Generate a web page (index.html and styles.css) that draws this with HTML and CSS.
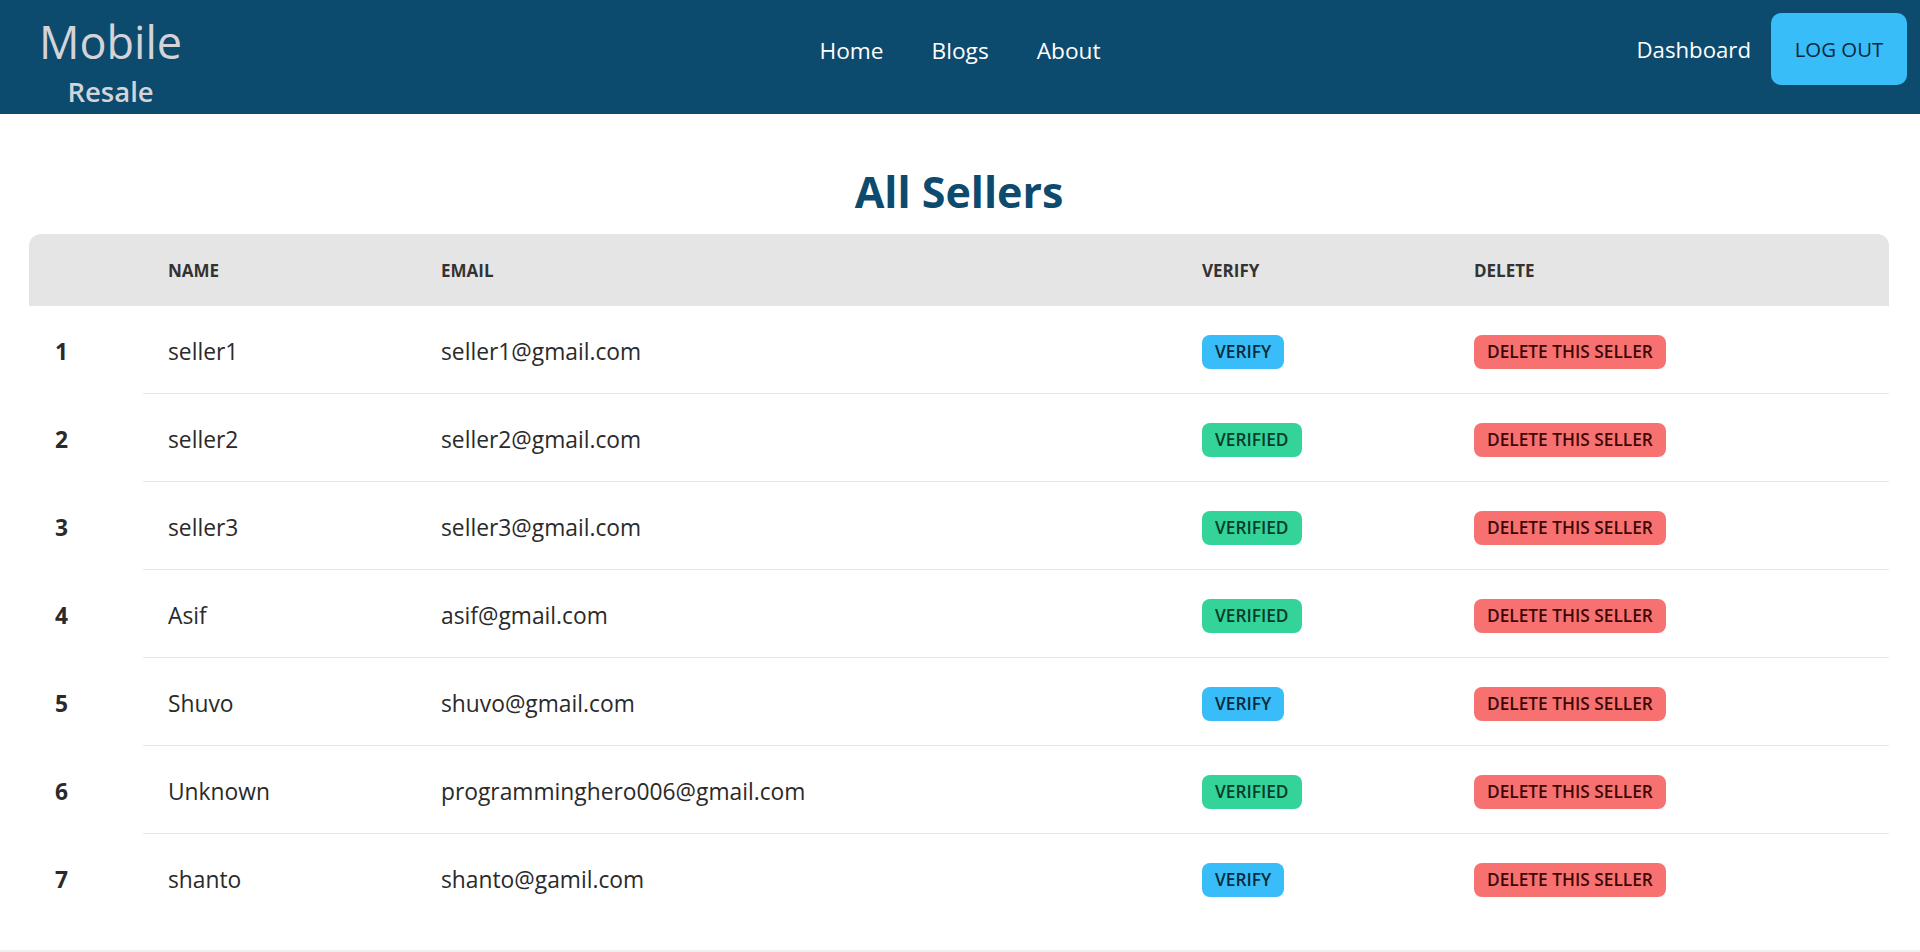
FILE: index.html
```html
<!DOCTYPE html>
<html lang="en">
<head>
<meta charset="utf-8">
<title>All Sellers - Mobile Resale</title>
<link rel="stylesheet" href="styles.css">
</head>
<body>
<header class="navbar">
  <div class="nav-left">
    <a class="logo" href="#">
      <span class="logo-main">Mobile</span>
      <span class="logo-sub">Resale</span>
    </a>
  </div>
  <nav class="nav-center">
    <a href="#">Home</a>
    <a href="#">Blogs</a>
    <a href="#">About</a>
  </nav>
  <div class="nav-right">
    <a class="nav-link" href="#">Dashboard</a>
    <button class="logout">LOG OUT</button>
  </div>
</header>
<main class="content">
  <h1 class="title">All Sellers</h1>
  <table class="sellers">
    <colgroup>
      <col class="c-idx"><col class="c-name"><col class="c-email"><col class="c-verify"><col class="c-delete">
    </colgroup>
    <thead>
      <tr><th></th><th>Name</th><th>Email</th><th>Verify</th><th>Delete</th></tr>
    </thead>
    <tbody>
      <tr><th>1</th><td>seller1</td><td>seller1@gmail.com</td><td><button class="badge b-verify">VERIFY</button></td><td><button class="badge b-delete">DELETE THIS SELLER</button></td></tr>
      <tr><th>2</th><td>seller2</td><td>seller2@gmail.com</td><td><button class="badge b-verified">VERIFIED</button></td><td><button class="badge b-delete">DELETE THIS SELLER</button></td></tr>
      <tr><th>3</th><td>seller3</td><td>seller3@gmail.com</td><td><button class="badge b-verified">VERIFIED</button></td><td><button class="badge b-delete">DELETE THIS SELLER</button></td></tr>
      <tr><th>4</th><td>Asif</td><td>asif@gmail.com</td><td><button class="badge b-verified">VERIFIED</button></td><td><button class="badge b-delete">DELETE THIS SELLER</button></td></tr>
      <tr><th>5</th><td>Shuvo</td><td>shuvo@gmail.com</td><td><button class="badge b-verify">VERIFY</button></td><td><button class="badge b-delete">DELETE THIS SELLER</button></td></tr>
      <tr><th>6</th><td>Unknown</td><td>programminghero006@gmail.com</td><td><button class="badge b-verified">VERIFIED</button></td><td><button class="badge b-delete">DELETE THIS SELLER</button></td></tr>
      <tr><th>7</th><td>shanto</td><td>shanto@gamil.com</td><td><button class="badge b-verify">VERIFY</button></td><td><button class="badge b-delete">DELETE THIS SELLER</button></td></tr>
    </tbody>
  </table>
</main>
<div class="page-end"></div>
</body>
</html>
```
FILE: styles.css
```css
* { box-sizing: border-box; }
html, body { margin: 0; padding: 0; }
body {
  font-family: "Open Sans", "Noto Sans", "Liberation Sans", sans-serif;
  color: #2a2a2a;
  background: #ffffff;
}
a { text-decoration: none; color: inherit; }

.navbar {
  height: 114px;
  background: #0c4a6e;
  display: flex;
  align-items: center;
  padding: 0 13px;
}
.nav-left { flex: 1; display: flex; align-self: flex-start; }
.logo {
  display: flex;
  flex-direction: column;
  align-items: center;
  color: #d4d4d8;
  margin-left: 26px;
  padding-top: 20px;
}
.logo-main { font-size: 45px; line-height: 44px; font-weight: 400; }
.logo-sub { font-size: 27.5px; line-height: 30px; font-weight: 600; margin-top: 13px; }

.nav-center {
  display: flex;
  gap: 48px;
  color: #ffffff;
  font-size: 22.7px;
  margin-top: -14px;
}
.nav-right {
  flex: 1;
  display: flex;
  justify-content: flex-end;
  align-items: center;
  gap: 20px;
  margin-top: -16px;
}
.nav-link { color: #ffffff; font-size: 22.2px; }
.logout {
  width: 136px;
  height: 72px;
  border: none;
  border-radius: 10px;
  background: #38bdf8;
  color: #0b2a3c;
  font-family: inherit;
  font-size: 20.4px;
  font-weight: 500;
  cursor: pointer;
}

.content { padding: 0 31px 0 29px; }
.title {
  margin: 0;
  padding-top: 30px;
  height: 120px;
  text-align: center;
  color: #0c4a6e;
  font-size: 43px;
  font-weight: 700;
  line-height: 96px;
}
.sellers {
  width: 100%;
  table-layout: fixed;
  border-collapse: separate;
  border-spacing: 0;
  font-size: 22.8px;
}
.c-idx { width: 114px; }
.c-name { width: 273px; }
.c-email { width: 761px; }
.c-verify { width: 272px; }
.c-delete { width: 440px; }

.sellers thead th {
  background: #e5e5e5;
  height: 72px;
  text-align: left;
  padding: 0 25px;
  font-size: 17px;
  font-weight: 700;
  text-transform: uppercase;
  color: #333;
}
.sellers thead th:first-child { border-top-left-radius: 12px; }
.sellers thead th:last-child { border-top-right-radius: 12px; }

.sellers tbody th,
.sellers tbody td {
  height: 88px;
  padding: 4px 25px 0;
  text-align: left;
  vertical-align: middle;
  border-bottom: 1px solid #e5e5e5;
  white-space: nowrap;
}
.sellers tbody tr:last-child td { border-bottom-color: transparent; }
.sellers tbody th {
  font-weight: 700;
  border-bottom-color: transparent;
  padding-left: 26px;
}

.badge {
  display: inline-flex;
  align-items: center;
  height: 34px;
  padding: 0 13px;
  border: none;
  border-radius: 8px;
  font-family: inherit;
  font-size: 17.3px;
  font-weight: 600;
  cursor: pointer;
}
.b-verify { background: #38bdf8; color: #0b2a3c; }
.b-verified { background: #34d399; color: #073b2a; }
.b-delete { background: #f87171; color: #3f0606; }

.page-end {
  height: 3px;
  margin-top: 28px;
  background: #efefef;
}
```
